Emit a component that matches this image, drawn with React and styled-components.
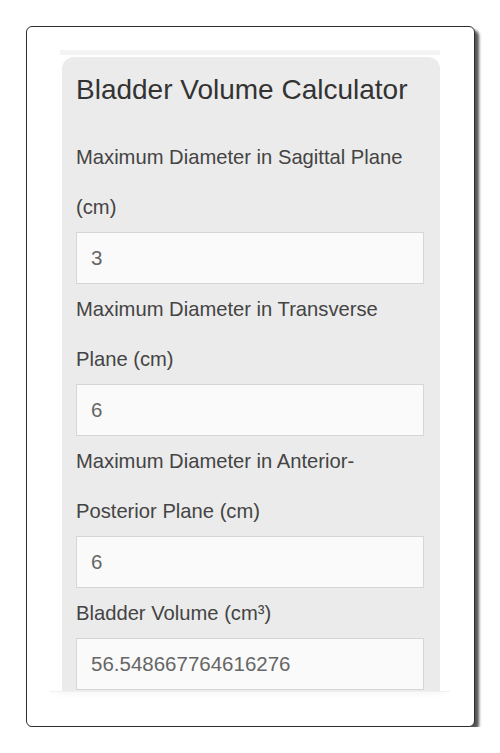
import React from 'react'
import styled, { createGlobalStyle } from 'styled-components'

const GlobalStyle = createGlobalStyle`
    * { box-sizing: border-box; }
    body {
        margin: 0;
        background: #fff;
        font-family: "Liberation Sans", Arial, sans-serif;
    }
`

const fields = [
    { label: 'Maximum Diameter in Sagittal Plane (cm)', value: '3' },
    { label: 'Maximum Diameter in Transverse Plane (cm)', value: '6' },
    { label: 'Maximum Diameter in Anterior-Posterior Plane (cm)', value: '6' },
    { label: 'Bladder Volume (cm³)', value: '56.548667764616276' },
]

const App = () => {
    return (
        <>
            <GlobalStyle />
            <Card>
                <Viewport>
                    <TopStrip />
                    <Panel>
                        <Title>Bladder Volume Calculator</Title>
                        {fields.map((f) => (
                            <Field key={ f.label }>
                                <Label>{ f.label }</Label>
                                <Input type="text" defaultValue={ f.value } readOnly />
                            </Field>
                        ))}
                    </Panel>
                </Viewport>
            </Card>
        </>
    )
}

const Card = styled.div`
    margin: 26px 0 0 26px;
    width: 449px;
    height: 701px;
    border: 1px solid #2e2e2e;
    border-radius: 6px;
    box-shadow: 4px 4px 3px #555;
    background: #fff;
    padding: 23px 0 0 23px;
`

const Viewport = styled.div`
    width: 400px;
    height: 642px;
    overflow: hidden;
    border-bottom: 1px solid #f0f0f0;
    box-shadow: 0 6px 8px -6px rgba(0, 0, 0, 0.06);
`

const TopStrip = styled.div`
    height: 5px;
    margin: 0 10px;
    background: #f4f4f4;
`

const Panel = styled.div`
    margin: 2px 10px 0 12px;
    padding: 8px 16px 40px 14px;
    background: #ebebeb;
    border-radius: 12px 12px 0 0;
`

const Title = styled.h2`
    margin: 0 0 17px;
    font-size: 28px;
    line-height: 50px;
    font-weight: normal;
    color: #333;
`

const Field = styled.div`
    display: flex;
    flex-direction: column;
`

const Label = styled.label`
    font-size: 20.2px;
    line-height: 50px;
    color: #444;
`

const Input = styled.input`
    height: 52px;
    width: 100%;
    margin: 0;
    padding: 0 14px;
    border: 1px solid #d6d6d6;
    background: #fafafa;
    font-family: inherit;
    font-size: 20.5px;
    color: #666;
    outline: none;
`

export default App
